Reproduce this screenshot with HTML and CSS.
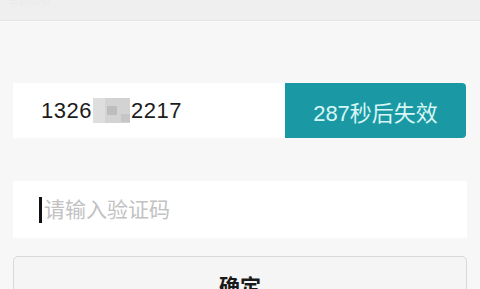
FILE: index.html
```html
<!DOCTYPE html>
<html>
<head>
    <meta charset="utf-8">
    <title>验证码登录</title>
    <link rel="stylesheet" href="styles.css">
</head>
<body>
    <div class="top-bar">
        <span class="top-title">手机验证</span>
    </div>

    <div class="container">
        <div class="phone-row">
            <div class="phone-box">
                <span>1326</span><span class="mosaic"></span><span>2217</span>
            </div>
            <div class="timer">287秒后失效</div>
        </div>

        <div class="code-box">
            <span class="caret"></span>
            <input type="text" class="code-input" placeholder="请输入验证码">
        </div>

        <button class="button">确定</button>
    </div>
</body>
</html>
```

FILE: styles.css
```css
body {
    margin: 0;
    background-color: #f7f7f7;
    font-family: "Liberation Sans", "Noto Sans CJK SC", sans-serif;
    overflow: hidden;
}

.top-bar {
    height: 20px;
    background-color: #efefef;
    border-bottom: 1px solid #e4e4e4;
    box-shadow: 0 1px 0 #fbfbfb;
}

.top-title {
    display: block;
    padding-left: 8px;
    font-size: 11px;
    line-height: 6px;
    color: #ebebeb;
    overflow: hidden;
    height: 6px;
}

.container {
    padding: 0 13px 0 13px;
}

.phone-row {
    display: flex;
    margin-top: 62px;
    margin-right: 1px;
    height: 55px;
}

.phone-box {
    flex: 1;
    background-color: #fff;
    display: flex;
    align-items: center;
    padding-left: 28px;
    font-size: 22px;
    letter-spacing: 0.5px;
    color: #1c1c1c;
}

.mosaic {
    display: inline-block;
    width: 37px;
    height: 25px;
    margin: 0 1px 0 1px;
    background-color: #d3d3d3;
    background-image:
        linear-gradient(#bdbdbd, #bdbdbd),
        linear-gradient(#dedede, #dedede),
        linear-gradient(#c6c6c6, #c6c6c6);
    background-size: 10px 9px, 12px 25px, 9px 8px;
    background-position: 14px 8px, 0 0, 28px 16px;
    background-repeat: no-repeat;
}

.timer {
    width: 181px;
    background-color: #1a99a4;
    border-radius: 0 4px 4px 0;
    color: #d8f6f6;
    font-size: 22px;
    display: flex;
    align-items: center;
    justify-content: center;
}

.code-box {
    margin-top: 43px;
    height: 57px;
    background-color: #fff;
    display: flex;
    align-items: center;
    padding-left: 26px;
}

.caret {
    width: 3px;
    height: 26px;
    background-color: #111;
    margin-right: 2px;
}

.code-input {
    border: none;
    outline: none;
    background: transparent;
    font-family: "Liberation Sans", "Noto Sans CJK SC", sans-serif;
    font-size: 21px;
    padding: 0;
    width: 300px;
}

.code-input::placeholder {
    color: #c2c2c2;
}

.button {
    display: block;
    width: 100%;
    margin-top: 18px;
    height: 58px;
    background-color: #f5f5f5;
    border: 1px solid #d9d9d9;
    border-radius: 5px;
    font-family: "Noto Sans CJK SC", sans-serif;
    font-size: 21px;
    line-height: 1;
    font-weight: bold;
    color: #1a1a1a;
    padding: 0;
    text-align: center;
    cursor: pointer;
}
```
